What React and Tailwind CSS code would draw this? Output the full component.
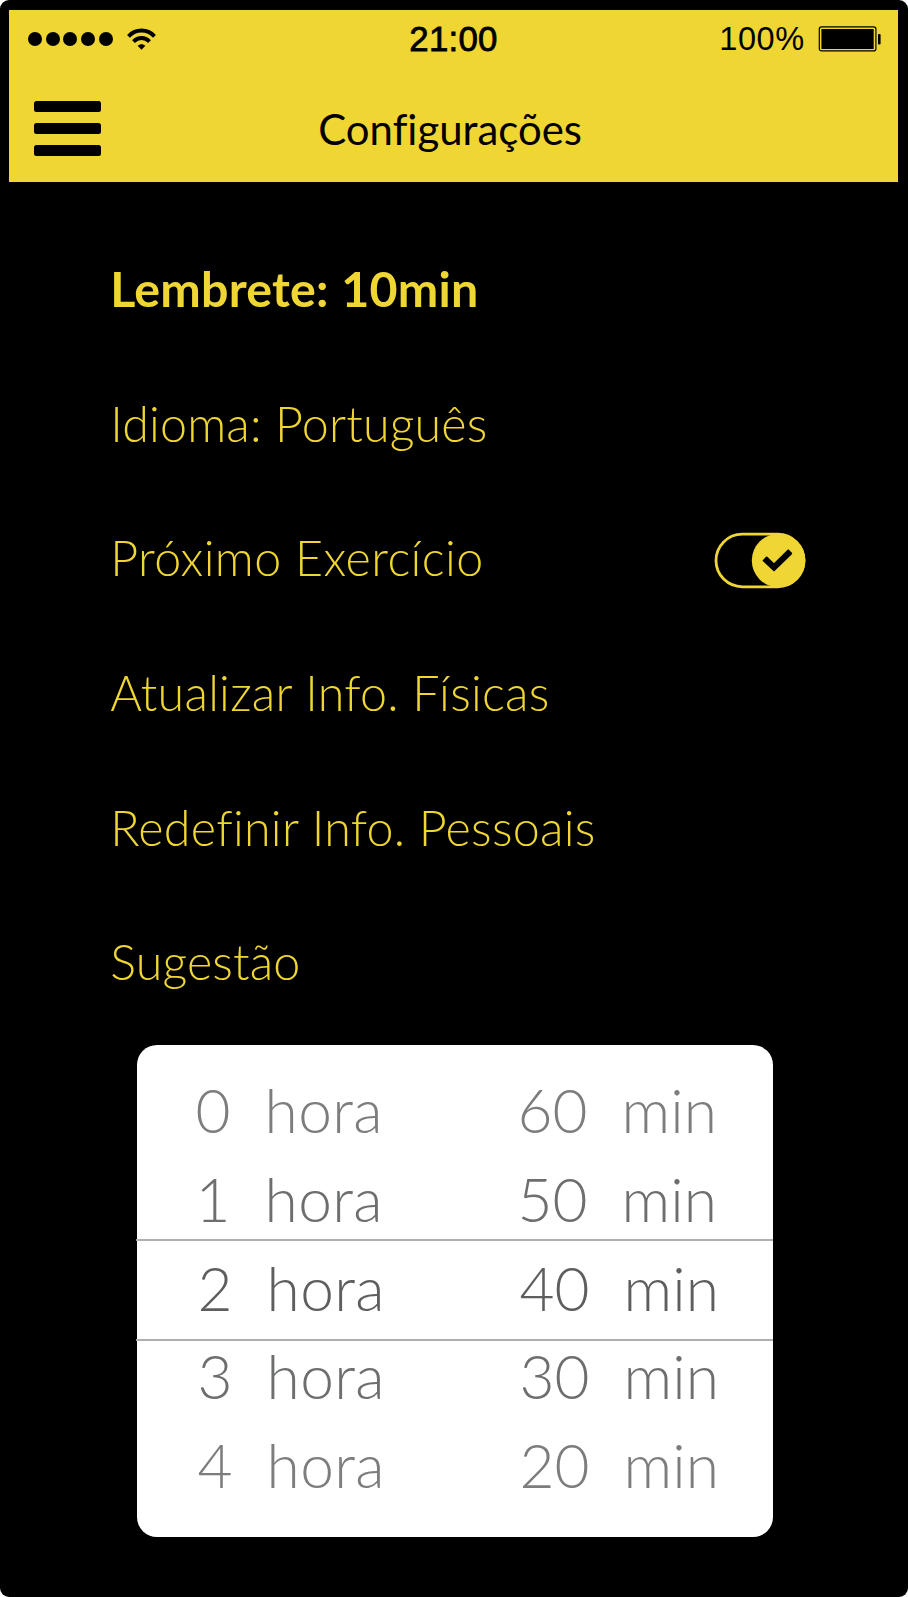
const menu = [
  { label: "Lembrete: 10min", style: "font-bold tracking-[0.2px] [word-spacing:0.6px]" },
  { label: "Idioma: Português", style: "font-light tracking-[0.18px]" },
  { label: "Próximo Exercício", style: "font-light tracking-[0.4px]", toggle: true },
  { label: "Atualizar Info. Físicas", style: "font-light tracking-[0.26px]" },
  { label: "Redefinir Info. Pessoais", style: "font-light tracking-[0.28px]" },
  { label: "Sugestão", style: "font-light tracking-[0.15px]" },
];

const times = [
  { h: "0", m: "60", style: "text-[#7c7d7d] pl-[59px] h-[89px]" },
  { h: "1", m: "50", style: "text-[#6d6f6f] pl-[59px] h-[89px]" },
  { h: "2", m: "40", style: "text-[#5e5e5e] pl-[61px] h-[89px]" },
  { h: "3", m: "30", style: "text-[#6d6f6f] pl-[61px] h-[88px]" },
  { h: "4", m: "20", style: "text-[#7c7d7d] pl-[61px] h-[90px]" },
];

function Wifi() {
  return (
    <svg className="ml-[14px] h-[22px] w-[29px]" viewBox="0 0 29 22" fill="none" stroke="#000" strokeWidth="3.9">
      <path d="M1.5 8.3C8.8 0.6 20.2 0.6 27.5 8.3" />
      <path d="M6.5 13.6C11.2 8.8 17.8 8.8 22.5 13.6" />
      <path d="M14.5 21.7L10.6 17.8C12.8 15.7 16.2 15.7 18.4 17.8Z" fill="#000" stroke="none" />
    </svg>
  );
}

function Battery() {
  return (
    <svg className="h-[26px] w-[63px]" viewBox="0 0 63 26">
      <rect x="1.3" y="0.9" width="56.6" height="24" rx="2.2" fill="none" stroke="#000" strokeWidth="1.2" />
      <rect x="3.4" y="3" width="52.3" height="20" rx="0.6" />
      <rect x="60" y="8" width="2.6" height="10.4" rx="1" />
    </svg>
  );
}

function Toggle() {
  return (
    <svg className="mt-[7px] h-[58px] w-[92px]" viewBox="0 0 92 58">
      <rect x="2" y="2.2" width="88" height="52.6" rx="26.3" fill="none" stroke="#efd633" strokeWidth="2.8" />
      <circle cx="64.6" cy="28.5" r="26.8" fill="#efd633" />
      <path
        d="M49.6 28.7L52.7 25.5L60 32.5L74.2 18.3L77.3 21.5L60 38.3Z"
        fill="#000"
        stroke="#000"
        strokeWidth="1.8"
        strokeLinejoin="round"
      />
    </svg>
  );
}

export default function App() {
  return (
    <div className="h-[1597px] w-[908px] bg-white">
      <div className="flex h-full w-full flex-col overflow-hidden rounded-[9px] bg-black pt-[10px] font-['Lato',sans-serif] [font-variant-ligatures:none]">
        <header className="ml-[9.3px] w-[889.2px] bg-[#efd633] text-black">
          <div className="flex h-[58px] items-center font-['Liberation_Sans',sans-serif] leading-none">
            <div className="flex w-[400px] items-center pl-[19px]">
              <div className="flex gap-[3.6px]">
                {[0, 1, 2, 3, 4].map((i) => (
                  <span key={i} className="h-[14px] w-[14px] rounded-full bg-black" />
                ))}
              </div>
              <Wifi />
            </div>
            <div className="w-[310px] text-[34.8px] tracking-[0.25px] [-webkit-text-stroke:0.8px_#000]">21:00</div>
            <div className="w-[99px] text-[32.5px] tracking-[0.55px]">100%</div>
            <Battery />
          </div>
          <div className="flex h-[114px] items-center pt-[7.4px] pl-[25px]">
            <div className="flex w-[67px] flex-col gap-[10.8px]">
              <span className="h-[11.3px] rounded-[2.5px] bg-black" />
              <span className="h-[11.3px] rounded-[2.5px] bg-black" />
              <span className="h-[11.3px] rounded-[2.5px] bg-black" />
            </div>
            <h1 className="mt-[3px] ml-[217px] text-[41.9px] leading-none">Configurações</h1>
          </div>
        </header>

        <ul className="mt-[39.2px] pr-[101.6px] pl-[110.2px] text-[48.4px] leading-none text-[#efd633]">
          {menu.map((item) => (
            <li key={item.label} className="flex h-[134.6px] items-center justify-between">
              <span className={item.style}>{item.label}</span>
              {item.toggle && <Toggle />}
            </li>
          ))}
        </ul>

        <div className="relative mt-[16.7px] ml-[136.6px] h-[491.3px] w-[636px] rounded-[20px] bg-white pt-[19.9px] text-[60.4px] leading-none font-light">
          {times.map((t) => (
            <div key={t.h} className={`flex items-center ${t.style}`}>
              <span className="w-[69px]">{t.h}</span>
              <span className="w-[253px] tracking-[0.35px]">hora</span>
              <span className="w-[104px]">{t.m}</span>
              <span className="tracking-[0.1px]">min</span>
            </div>
          ))}
          <div className="absolute top-[193.9px] left-[-1px] h-[102px] w-[637px] border-y-2 border-[#afafaf]" />
        </div>
      </div>
    </div>
  );
}
